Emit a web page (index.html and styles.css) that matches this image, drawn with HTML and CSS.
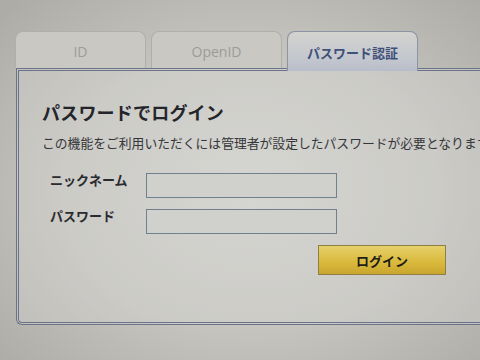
FILE: index.html
```html
<!DOCTYPE html>
<html lang="ja">
<head>
    <meta charset="UTF-8">
    <title>パスワード認証</title>
    <link rel="stylesheet" href="styles.css">
</head>
<body>
    <div class="screen">
        <div class="tabs">
            <div class="tab">ID</div>
            <div class="tab">OpenID</div>
            <div class="tab active">パスワード認証</div>
        </div>
        <div class="panel">
            <h1>パスワードでログイン</h1>
            <p class="desc">この機能をご利用いただくには管理者が設定したパスワードが必要となります。</p>
            <div class="form">
                <div class="row">
                    <label>ニックネーム</label>
                    <input type="text" class="field">
                </div>
                <div class="row">
                    <label>パスワード</label>
                    <input type="password" class="field">
                </div>
            </div>
            <div class="actions">
                <button class="login-btn">ログイン</button>
            </div>
        </div>
    </div>
</body>
</html>
```

FILE: styles.css
```css
body {
    margin: 0;
    width: 480px;
    height: 360px;
    overflow: hidden;
    font-family: "Noto Sans CJK JP", "Noto Sans", sans-serif;
    background: radial-gradient(ellipse 340px 260px at 250px 190px, #d2d2ce 0%, #c4c3be 55%, #adaca7 100%);
}

.screen {
    padding: 30px 0 0 15px;
}

.tabs {
    display: flex;
    align-items: flex-end;
    gap: 5px;
    height: 38px;
    position: relative;
    z-index: 2;
}

.tab {
    width: 131px;
    height: 37px;
    box-sizing: border-box;
    border: 1px solid #b0afaa;
    border-bottom: none;
    border-radius: 8px 8px 0 0;
    background: #c9c8c3;
    color: #9d9c97;
    font-family: "Open Sans", "Noto Sans", sans-serif;
    font-size: 14px;
    text-align: center;
    line-height: 40px;
}

.tab.active {
    height: 40px;
    margin-bottom: -3px;
    border: 1px solid #8c93a3;
    border-bottom: none;
    background: linear-gradient(#d3d3cf, #c3c6ce 70%, #b8bdca);
    color: #3f5079;
    font-family: "Noto Sans CJK JP", sans-serif;
    font-size: 13px;
    font-weight: bold;
    line-height: 42px;
}

.panel {
    margin-left: 1px;
    width: 480px;
    height: 257px;
    box-sizing: border-box;
    border: 3px double #6a7389;
    border-right: none;
    border-radius: 0 0 0 6px;
    padding: 28px 0 0 23px;
    background: rgba(222, 222, 218, 0.3);
}

.panel h1 {
    margin: 0;
    font-size: 18px;
    font-weight: bold;
    color: #24252a;
    line-height: 26px;
    letter-spacing: 0.2px;
}

.desc {
    margin: 9px 0 0;
    font-size: 12.8px;
    color: #35363a;
    white-space: nowrap;
    line-height: 18px;
}

.form {
    display: flex;
    flex-direction: column;
    gap: 11px;
    margin-top: 21px;
    padding-left: 8px;
}

.row {
    display: flex;
    align-items: flex-start;
}

.row label {
    width: 96px;
    font-size: 13px;
    font-weight: bold;
    color: #2a2b30;
    line-height: 13px;
}

.field {
    width: 191px;
    height: 25px;
    box-sizing: border-box;
    border: 1px solid #71808f;
    background: #d0d0cc;
    margin: 0;
    padding: 0 4px;
}

.actions {
    display: flex;
    margin-top: 11px;
    padding-left: 276px;
}

.login-btn {
    width: 128px;
    height: 30px;
    border: 1px solid #8d7f45;
    background: linear-gradient(#e6d06a, #d9b93c 60%, #c9a52e);
    font-family: "Noto Sans CJK JP", sans-serif;
    font-size: 13px;
    font-weight: bold;
    color: #1e1d18;
    cursor: pointer;
}
```
